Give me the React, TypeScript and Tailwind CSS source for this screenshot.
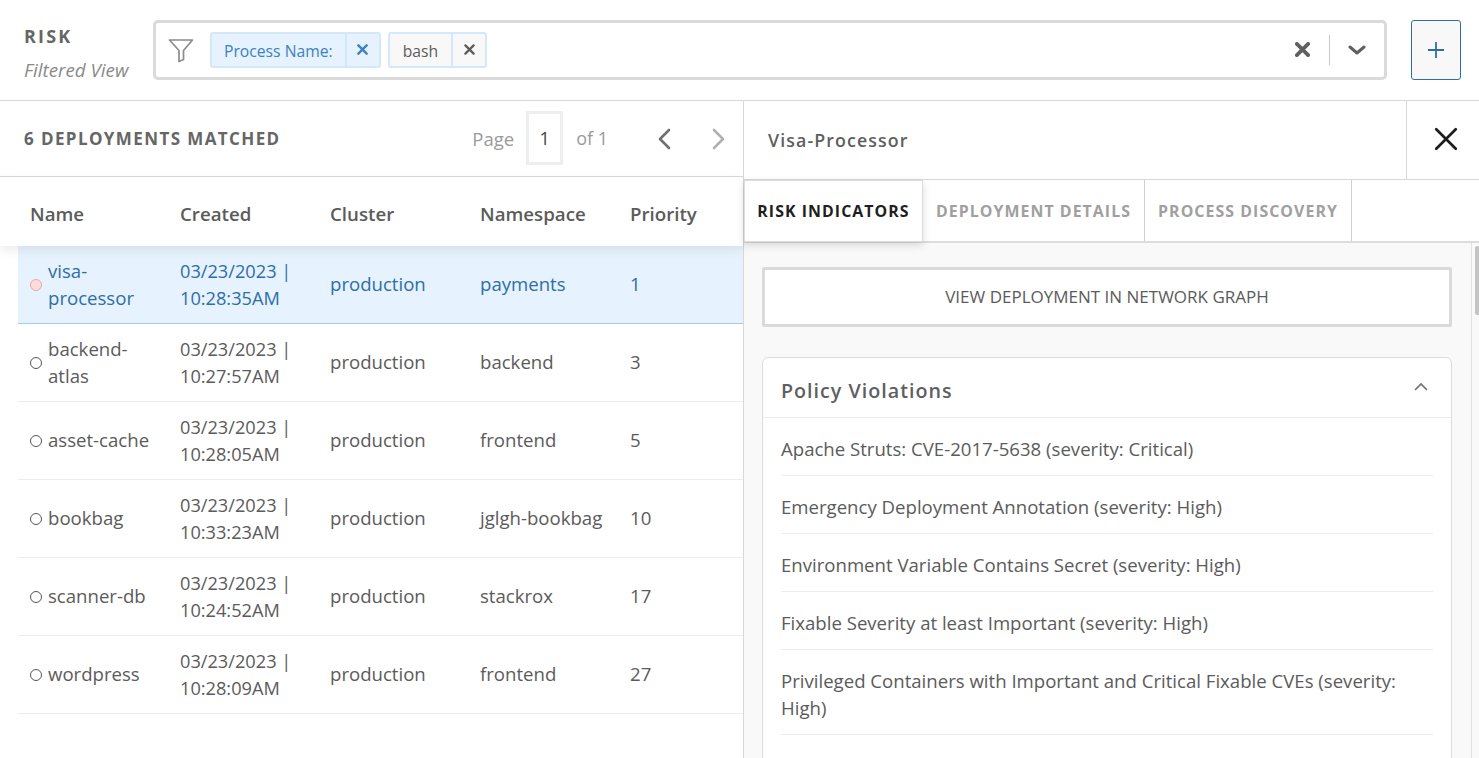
import React from "react";

const rows = [
  { name: ["visa-", "processor"], d: "10:28:35AM", c: "production", n: "payments", p: "1", sel: true },
  { name: ["backend-", "atlas"], d: "10:27:57AM", c: "production", n: "backend", p: "3" },
  { name: ["asset-cache"], d: "10:28:05AM", c: "production", n: "frontend", p: "5" },
  { name: ["bookbag"], d: "10:33:23AM", c: "production", n: "jglgh-bookbag", p: "10" },
  { name: ["scanner-db"], d: "10:24:52AM", c: "production", n: "stackrox", p: "17" },
  { name: ["wordpress"], d: "10:28:09AM", c: "production", n: "frontend", p: "27" },
];

const policies = [
  "Apache Struts: CVE-2017-5638 (severity: Critical)",
  "Emergency Deployment Annotation (severity: High)",
  "Environment Variable Contains Secret (severity: High)",
  "Fixable Severity at least Important (severity: High)",
  "Privileged Containers with Important and Critical Fixable CVEs (severity: High)",
];

function X({ className, size = 12, sw = 3 }: { className?: string; size?: number; sw?: number }) {
  return (
    <svg width={size} height={size} viewBox="0 0 12 12" className={className} fill="none" stroke="currentColor" strokeWidth={sw} strokeLinecap="round">
      <path d="M1.5 1.5 10.5 10.5M10.5 1.5 1.5 10.5" />
    </svg>
  );
}

export default function App() {
  return (
    <div className="w-[1479px] h-[758px] overflow-hidden bg-white text-[#5b5b5b] text-[18.6px] flex flex-col" style={{ fontFamily: '"Open Sans", sans-serif' }}>
      <header className="h-[101px] shrink-0 border-b border-[#d8d8d8] flex items-center pl-[24px] pb-[1px]">
        <div className="w-[129px] shrink-0">
          <div className="text-[18px] font-bold tracking-[2.2px] leading-[24px] text-[#666] mt-[7px]">RISK</div>
          <div className="text-[18.8px] italic text-[#8a8a8a] leading-[24px] mt-[10px] whitespace-nowrap">Filtered View</div>
        </div>
        <div className="w-[1234px] h-[60px] border-[3px] border-[#dadada] rounded-[5px] flex items-center">
          <svg width="26" height="26" viewBox="0 0 26 26" className="ml-[12px] text-[#8c8c8c]" fill="none" stroke="currentColor" strokeWidth="1.7" strokeLinejoin="round">
            <path d="M1.5 3h23L15.5 13.5V22.5L11 24.5V13.5Z" />
          </svg>
          <div className="ml-[16px] h-[36px] flex border-2 border-[#d3e8f8] rounded-[3px] bg-[#e6f2fd] text-[#3c82bd] text-[15.7px]">
            <span className="pl-[12px] pr-[12px] pt-[4px] flex items-center whitespace-nowrap">Process Name:</span>
            <span className="w-[34px] border-l-2 border-[#d3e8f8] flex items-center justify-center"><X size={11} sw={2.6} /></span>
          </div>
          <div className="ml-[7px] h-[36px] flex border-2 border-[#d3e8f8] rounded-[3px] bg-[#f8f8f8] text-[#5b5b5b] text-[15.7px]">
            <span className="px-[13px] pt-[4px] flex items-center">bash</span>
            <span className="w-[34px] border-l-2 border-[#d3e8f8] flex items-center justify-center"><X size={11} sw={2.4} /></span>
          </div>
          <div className="flex-1" />
          <X size={15} sw={3} className="text-[#606060] mr-[-1px]" />
          <div className="w-px h-[30px] bg-[#c8c8c8] ml-[20px]" />
          <svg width="18" height="12" viewBox="0 0 18 12" className="ml-[18px] mr-[18px] text-[#606060]" fill="none" stroke="currentColor" strokeWidth="3" strokeLinecap="round" strokeLinejoin="round">
            <path d="M2 3l7 6 7-6" />
          </svg>
        </div>
        <button className="ml-[24px] w-[50px] h-[60px] bg-[#f8f8f8] border border-[#2e6ea8] rounded-[3px] flex items-center justify-center text-[#2e6ea8]">
          <svg width="18" height="18" viewBox="0 0 18 18" fill="none" stroke="currentColor" strokeWidth="1.8"><path d="M9 1v16M1 9h16" /></svg>
        </button>
      </header>

      <div className="flex-1 flex min-h-0">
        <section className="w-[744px] shrink-0 border-r border-[#d8d8d8] flex flex-col">
          <div className="h-[76px] shrink-0 border-b border-[#d8d8d8] flex items-center pl-[24px]">
            <div className="font-bold text-[17px] tracking-[1.4px] text-[#666]">6 DEPLOYMENTS MATCHED</div>
            <div className="flex-1" />
            <span className="text-[#9a9a9a] text-[18.5px]">Page</span>
            <span className="ml-[12px] w-[37px] h-[54px] mb-[2px] pt-[2px] border-[3px] border-[#eeeeee] flex items-center justify-center text-[#444] text-[18px]">1</span>
            <span className="ml-[13px] text-[#9a9a9a] text-[18px]">of 1</span>
            <svg width="14" height="22" viewBox="0 0 14 22" className="ml-[49px] text-[#707070]" fill="none" stroke="currentColor" strokeWidth="2.6" strokeLinecap="round" strokeLinejoin="round"><path d="M12 2 3 11l9 9" /></svg>
            <svg width="14" height="22" viewBox="0 0 14 22" className="ml-[41px] mr-[17px] text-[#b0b0b0]" fill="none" stroke="currentColor" strokeWidth="2.6" strokeLinecap="round" strokeLinejoin="round"><path d="M2 2l9 9-9 9" /></svg>
          </div>
          <div className="h-[69px] shrink-0 flex items-center font-semibold text-[18.7px] text-[#5b5b5b] shadow-[0_4px_10px_rgba(0,0,0,0.08)] relative z-10 pl-[30px] pt-[6px]">
            <div className="w-[150px]">Name</div>
            <div className="w-[150px]">Created</div>
            <div className="w-[150px]">Cluster</div>
            <div className="w-[150px]">Namespace</div>
            <div>Priority</div>
          </div>
          <div className="ml-[18px]">
            {rows.map((r) => (
              <div key={r.d} className={`h-[78px] flex items-center border-b leading-[27px] ${r.sel ? "bg-[#e6f2fd] border-[#a6cbe9] text-[#2e6ea8]" : "border-[#ededed]"}`}>
                <div className="w-[162px] pl-[12px] flex items-center shrink-0">
                  <span className={`w-[12px] h-[12px] rounded-full border shrink-0 ${r.sel ? "border-[#f1a5a5] bg-[#fcdcdc]" : "border-[#555] bg-white"}`} />
                  <div className="ml-[6px] mt-[-2px]">{r.name.map((l) => <div key={l}>{l}</div>)}</div>
                </div>
                <div className="w-[150px] shrink-0 text-[18.2px]"><div>03/23/2023 |</div><div>{r.d}</div></div>
                <div className="w-[150px] shrink-0 mt-[-2px]">{r.c}</div>
                <div className="w-[150px] shrink-0 mt-[-2px] whitespace-nowrap">{r.n}</div>
                <div className="mt-[-2px]">{r.p}</div>
              </div>
            ))}
          </div>
        </section>

        <section className="flex-1 min-w-0 flex flex-col">
          <div className="h-[79px] shrink-0 border-b border-[#d8d8d8] flex items-center">
            <div className="flex-1 pl-[24px] font-semibold text-[17.8px] tracking-[1.1px] text-[#5f5f5f]">Visa-Processor</div>
            <div className="w-[73px] h-full border-l border-[#d8d8d8] flex items-center justify-center text-[#1c1c1c] pl-[6px] pb-[2px]">
              <X size={26} sw={1.25} />
            </div>
          </div>
          <div className="h-[63px] shrink-0 flex border-b-2 border-[#dcdcdc] items-stretch text-[15.9px] tracking-[1.05px]">
            <div className="w-[179px] h-[62px] pt-[2px] bg-white border border-[#dcdcdc] flex items-center justify-center text-[#1f1f1f] font-bold relative z-10 shadow-[0_3px_8px_rgba(0,0,0,0.14)] whitespace-nowrap">RISK INDICATORS</div>
            <div className="w-[222px] pt-[2px] border-r border-[#d0d0d0] flex items-center justify-center text-[#a0a0a0] font-bold whitespace-nowrap">DEPLOYMENT DETAILS</div>
            <div className="w-[207px] pt-[2px] border-r border-[#d0d0d0] flex items-center justify-center text-[#a0a0a0] font-bold whitespace-nowrap">PROCESS DISCOVERY</div>
          </div>
          <div className="flex-1 min-h-0 bg-[#f9f9f9] flex overflow-hidden">
            <div className="w-[727px] shrink-0 pl-[18px] pr-[19px] pt-[24px]">
              <button className="w-full h-[60px] bg-white border-[3px] border-[#dadada] rounded-[2px] text-[17px] text-[#5b5b5b]">VIEW DEPLOYMENT IN NETWORK GRAPH</button>
              <div className="mt-[30px] bg-white border border-[#dcdcdc] rounded-[6px] min-h-[500px]">
                <div className="h-[60px] border-b border-[#ededed] flex items-center justify-between pl-[18px] pr-[22px]">
                  <span className="font-semibold text-[19.7px] tracking-[1px] text-[#5f5f5f] mt-[6px]">Policy Violations</span>
                  <svg width="16" height="10" viewBox="0 0 16 10" fill="none" stroke="#707070" strokeWidth="1.6" className="mt-[-2px]"><path d="M2 8l6-6 6 6" /></svg>
                </div>
                <div className="px-[18px] leading-[27px]">
                  {policies.map((p) => (
                    <div key={p} className="border-b border-[#ededed] pt-[17px] pb-[13px]">{p}</div>
                  ))}
                </div>
              </div>
            </div>
            <div className="flex-1 border-l border-[#e2e2e2] pt-[3px] pl-[3px]">
              <div className="w-[5px] h-[69px] rounded-[3px] bg-[#c4c4c4]" />
            </div>
          </div>
        </section>
      </div>
    </div>
  );
}
